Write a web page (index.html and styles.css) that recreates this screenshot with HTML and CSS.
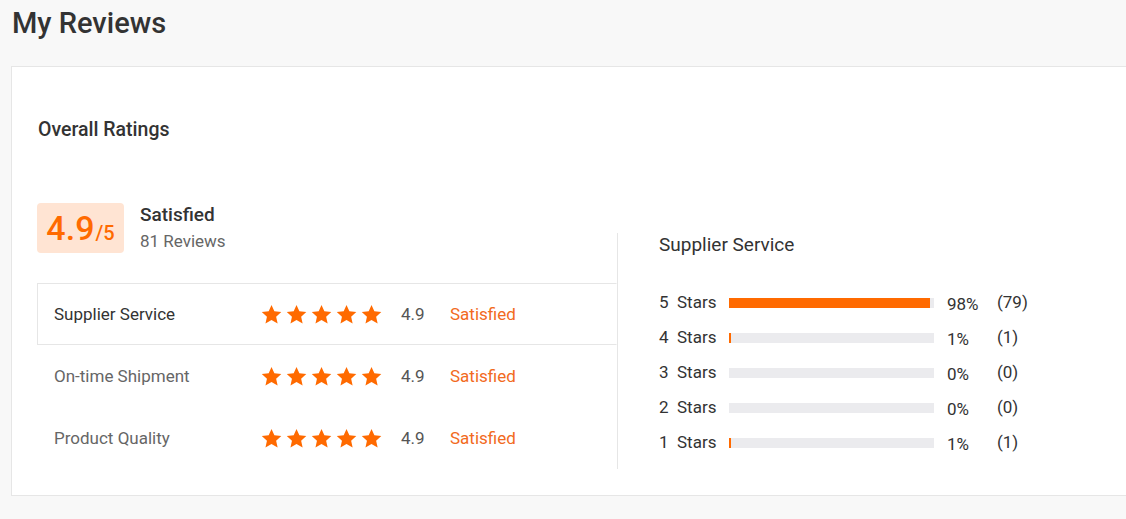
FILE: index.html
```html
<!DOCTYPE html>
<html lang="en">
<head>
<meta charset="utf-8">
<title>My Reviews</title>
<link rel="stylesheet" href="styles.css">
</head>
<body>
<svg width="0" height="0" class="defs" aria-hidden="true">
  <defs>
    <symbol id="star" viewBox="0 0 24 24">
      <path d="M12 1.2l3.3 7.2 7.9.8-5.9 5.3 1.7 7.8L12 18.3l-6.9 4 1.7-7.8L.9 9.2l7.9-.8z"/>
    </symbol>
  </defs>
</svg>
<main class="page">
  <h1 class="page-title">My Reviews</h1>
  <section class="card">
    <h2 class="card-title">Overall Ratings</h2>
    <div class="content">
      <div class="left">
        <div class="summary">
          <div class="score-box"><span class="score">4.9</span><span class="score-max">/5</span></div>
          <div class="summary-text">
            <div class="summary-label">Satisfied</div>
            <div class="summary-count">81 Reviews</div>
          </div>
        </div>
        <div class="table">
          <div class="row active">
            <div class="row-label">Supplier Service</div>
            <div class="stars">
              <svg class="star"><use href="#star"/></svg><svg class="star"><use href="#star"/></svg><svg class="star"><use href="#star"/></svg><svg class="star"><use href="#star"/></svg><svg class="star"><use href="#star"/></svg>
            </div>
            <div class="row-score">4.9</div>
            <div class="row-status">Satisfied</div>
          </div>
          <div class="row">
            <div class="row-label">On-time Shipment</div>
            <div class="stars">
              <svg class="star"><use href="#star"/></svg><svg class="star"><use href="#star"/></svg><svg class="star"><use href="#star"/></svg><svg class="star"><use href="#star"/></svg><svg class="star"><use href="#star"/></svg>
            </div>
            <div class="row-score">4.9</div>
            <div class="row-status">Satisfied</div>
          </div>
          <div class="row">
            <div class="row-label">Product Quality</div>
            <div class="stars">
              <svg class="star"><use href="#star"/></svg><svg class="star"><use href="#star"/></svg><svg class="star"><use href="#star"/></svg><svg class="star"><use href="#star"/></svg><svg class="star"><use href="#star"/></svg>
            </div>
            <div class="row-score">4.9</div>
            <div class="row-status">Satisfied</div>
          </div>
        </div>
      </div>
      <div class="right">
        <h3 class="dist-title">Supplier Service</h3>
        <div class="dist">
          <div class="dist-row">
            <span class="dist-num">5</span><span class="dist-word">Stars</span>
            <div class="bar"><div class="bar-fill" style="width:98%"></div></div>
            <span class="dist-pct">98%</span><span class="dist-count">(79)</span>
          </div>
          <div class="dist-row">
            <span class="dist-num">4</span><span class="dist-word">Stars</span>
            <div class="bar"><div class="bar-fill" style="width:1%"></div></div>
            <span class="dist-pct">1%</span><span class="dist-count">(1)</span>
          </div>
          <div class="dist-row">
            <span class="dist-num">3</span><span class="dist-word">Stars</span>
            <div class="bar"><div class="bar-fill" style="width:0%"></div></div>
            <span class="dist-pct">0%</span><span class="dist-count">(0)</span>
          </div>
          <div class="dist-row">
            <span class="dist-num">2</span><span class="dist-word">Stars</span>
            <div class="bar"><div class="bar-fill" style="width:0%"></div></div>
            <span class="dist-pct">0%</span><span class="dist-count">(0)</span>
          </div>
          <div class="dist-row">
            <span class="dist-num">1</span><span class="dist-word">Stars</span>
            <div class="bar"><div class="bar-fill" style="width:1%"></div></div>
            <span class="dist-pct">1%</span><span class="dist-count">(1)</span>
          </div>
        </div>
      </div>
    </div>
  </section>
</main>
</body>
</html>
```
FILE: styles.css
```css
html, body {
  margin: 0;
  padding: 0;
  overflow: hidden;
  background: #f8f8f8;
  font-family: Roboto, "Liberation Sans", Arial, sans-serif;
  color: #333;
}

.defs {
  position: absolute;
  width: 0;
  height: 0;
}

.page {
  padding: 6px 0 0 11px;
}

.page-title {
  margin: 0 0 26px 1px;
  font-size: 29px;
  line-height: 34px;
  font-weight: 500;
  color: #333;
}

.card {
  width: 1140px;
  height: 430px;
  box-sizing: border-box;
  background: #fff;
  border: 1px solid #e6e6e6;
  padding: 51px 26px 0 25px;
}

.card-title {
  margin: 0 0 0 1px;
  font-size: 19.5px;
  line-height: 24px;
  font-weight: 500;
  color: #333;
}

.content {
  display: flex;
  align-items: stretch;
  margin-top: 61px;
}

.left {
  width: 580px;
}

.summary {
  display: flex;
  align-items: center;
  gap: 16px;
}

.score-box {
  width: 87px;
  height: 50px;
  box-sizing: border-box;
  background: #ffe4d3;
  border-radius: 4px;
  display: flex;
  align-items: baseline;
  justify-content: center;
  padding-top: 3px;
  color: #ff6a00;
}

.score {
  font-size: 34px;
  line-height: 44px;
  font-weight: 500;
}

.score-max {
  font-size: 20px;
  font-weight: 500;
  margin-left: 1px;
}

.summary-label {
  font-size: 19px;
  line-height: 24px;
  font-weight: 500;
  color: #333;
}

.summary-count {
  margin-top: 2px;
  font-size: 17px;
  line-height: 24px;
  color: #666;
}

.table {
  margin-top: 30px;
}

.row {
  display: flex;
  align-items: center;
  height: 62px;
  box-sizing: border-box;
  padding-left: 16px;
  border: 1px solid transparent;
  font-size: 17px;
}

.row.active {
  border-color: #e6e6e6;
  border-right-color: transparent;
}

.row-label {
  width: 207px;
  color: #666;
}

.row.active .row-label {
  color: #333;
}

.stars {
  width: 140px;
  display: flex;
  gap: 4px;
}

.star {
  width: 21px;
  height: 21px;
  fill: #ff6a00;
}

.row-score {
  width: 49px;
  color: #555;
}

.row-status {
  color: #f26a21;
}

.right {
  margin-top: 30px;
  border-left: 1px solid #e6e6e6;
  padding-left: 41px;
}

.dist-title {
  margin: 0;
  font-size: 19px;
  line-height: 24px;
  font-weight: 400;
  color: #333;
}

.dist {
  margin-top: 27px;
}

.dist-row {
  display: flex;
  align-items: center;
  height: 35px;
  font-size: 17px;
  color: #333;
}

.dist-num {
  width: 18px;
}

.dist-word {
  width: 52px;
}

.bar {
  width: 205px;
  height: 10px;
  margin-top: 3px;
  background: #ebebee;
}

.bar-fill {
  height: 100%;
  min-width: 0;
  background: #ff6a00;
}

.dist-pct {
  width: 50px;
  margin-left: 13px;
  margin-top: 4px;
}

.dist-count {
  margin-top: 1px;
}
```
